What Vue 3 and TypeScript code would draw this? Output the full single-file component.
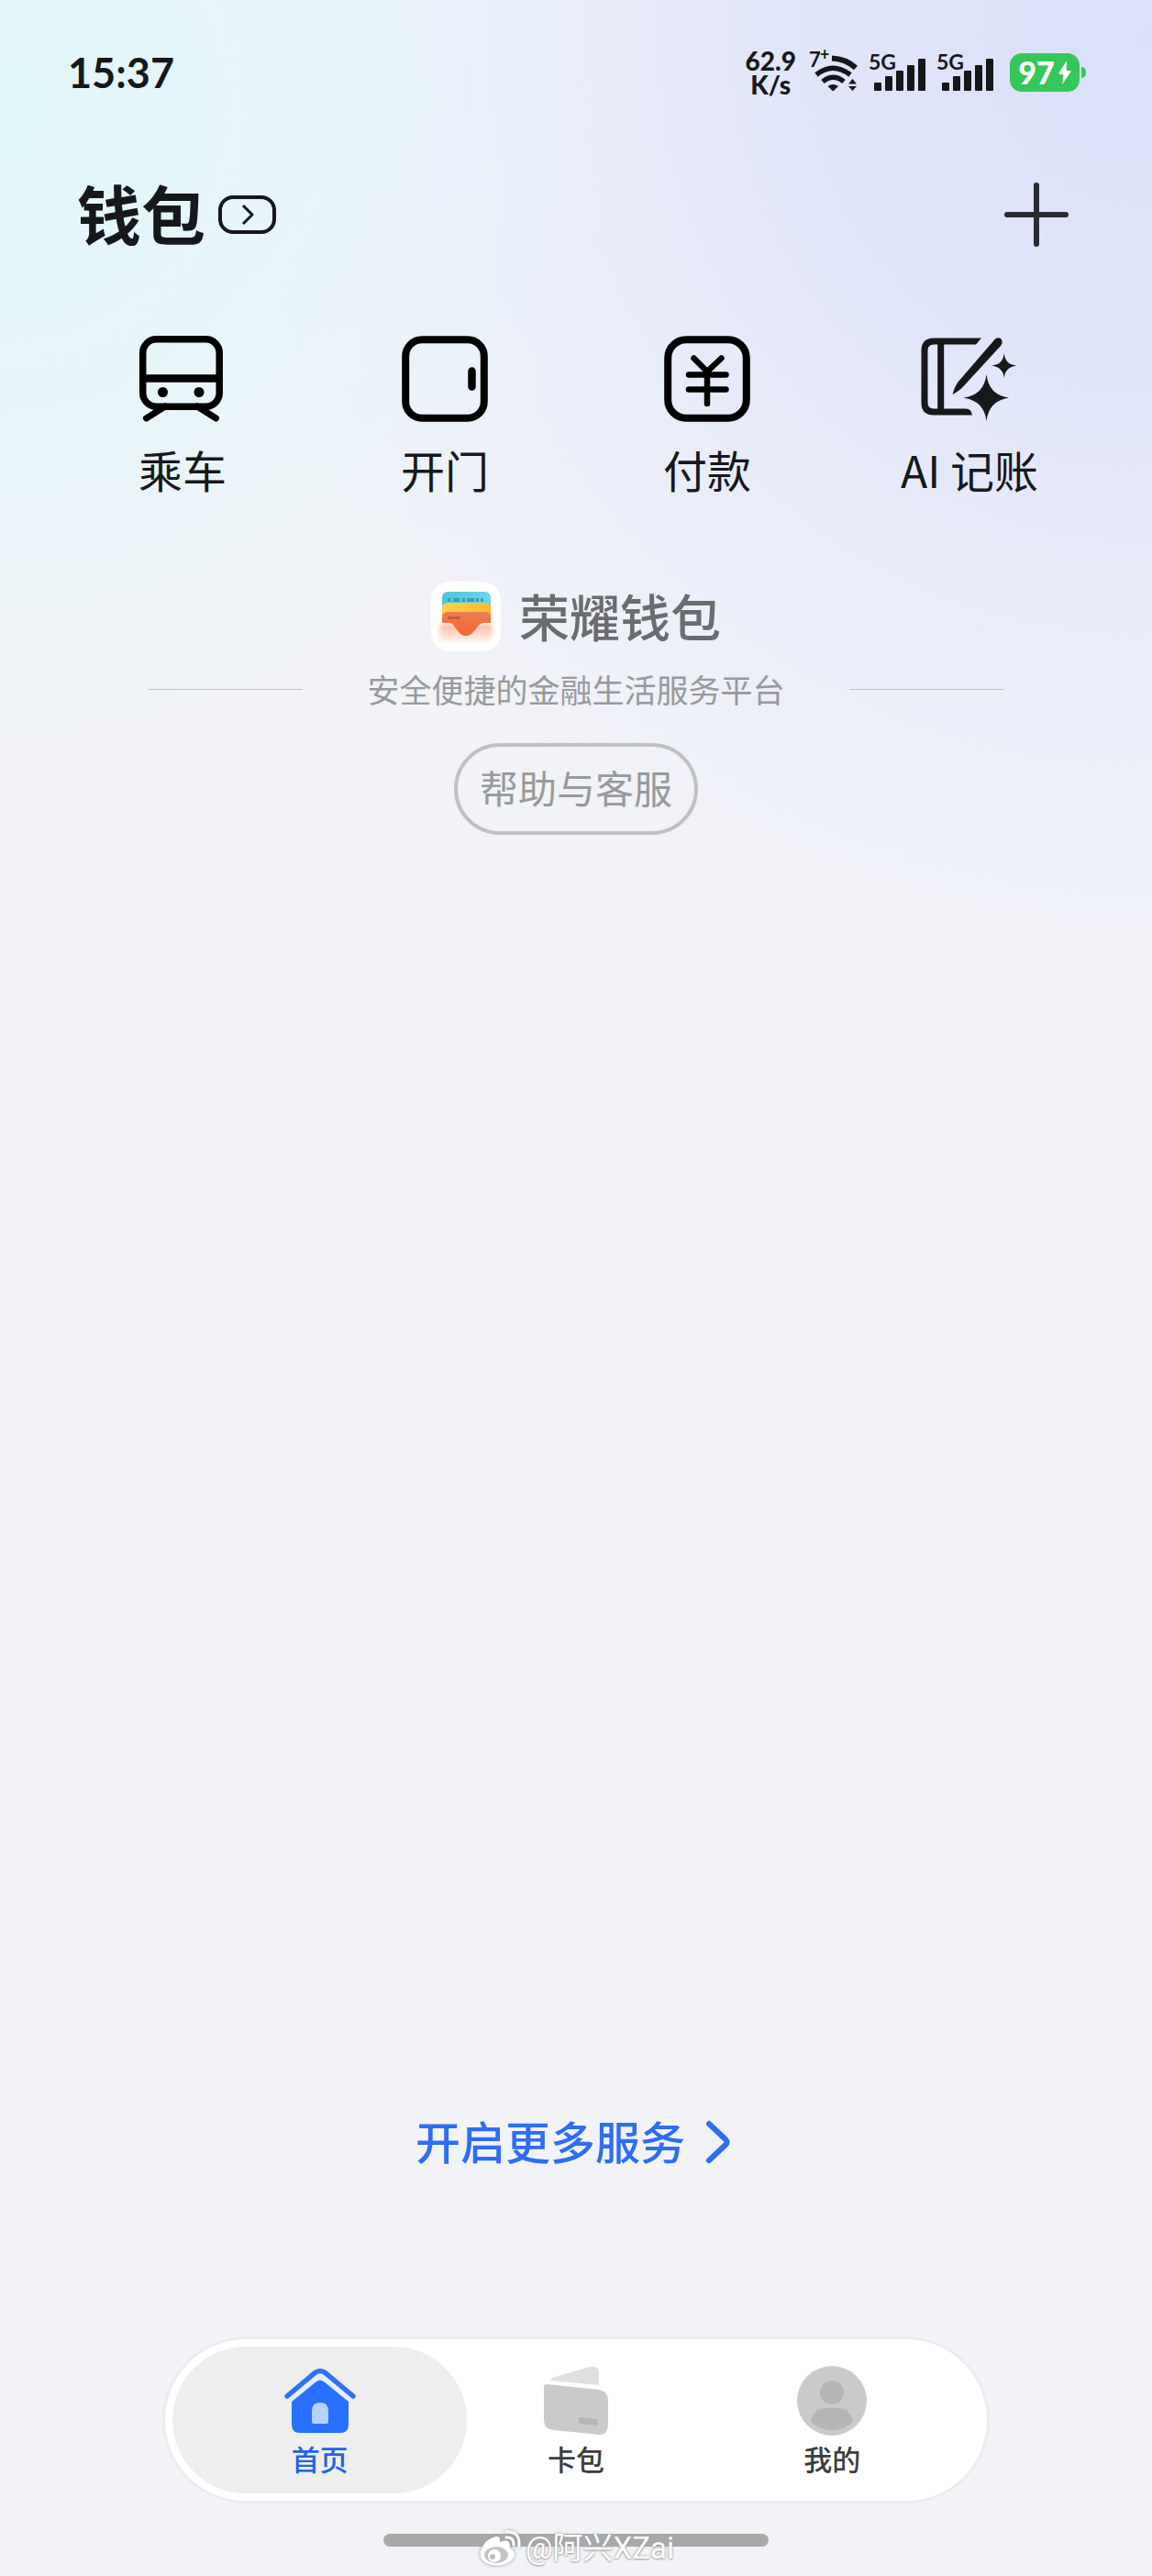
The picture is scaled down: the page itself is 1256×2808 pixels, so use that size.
<script setup lang="ts">
import { ref } from 'vue'

type Tab = 'home' | 'cards' | 'mine'

const tabs: { id: Tab; label: string }[] = [
  { id: 'home', label: '首页' },
  { id: 'cards', label: '卡包' },
  { id: 'mine', label: '我的' },
]
const current = ref<Tab>('home')
const sims = ['sim1', 'sim2']
</script>

<template>
  <div class="page">
    <header class="status">
      <time class="clock">15:37</time>
      <div class="indicators">
        <div class="speed"><span>62.9</span><span>K/s</span></div>
        <div class="wifi">
          <span class="wifi-gen">7<sup>+</sup></span>
          <svg width="54" height="44" viewBox="0 0 54 44" aria-hidden="true">
            <g fill="none" stroke="#15171b" stroke-width="6">
              <path d="M25 6.500Q40 7 51 17" />
              <path d="M8 24.500Q26 10 45 24.500" stroke-width="5.500" />
              <path d="M15 32Q26.500 22.500 38 32" stroke-width="5.500" />
            </g>
            <path d="M20.500 37Q26 33 32 37L26.300 42.500Z" fill="#15171b" />
            <path d="M43 34.500 47.500 29 52 34.500ZM43 37 47.500 42 52 37Z" fill="#15171b" />
          </svg>
        </div>
        <div v-for="sim in sims" :key="sim" class="signal">
          <span class="net">5G</span>
          <svg width="56" height="36" viewBox="0 0 56 36" aria-hidden="true">
            <g fill="#15171b">
              <rect x="0" y="27" width="8" height="9" rx="1" />
              <rect x="12" y="20" width="8" height="16" rx="1" />
              <rect x="24" y="14" width="8" height="22" rx="1" />
              <rect x="36" y="8" width="8" height="28" rx="1" />
              <rect x="48" y="1" width="8" height="35" rx="1" />
            </g>
          </svg>
        </div>
        <div class="battery">
          <div class="battery-body">
            <span>97</span>
            <svg width="14" height="28" viewBox="0 0 14 28" aria-hidden="true">
              <path d="M9 1 0 15.500 5.500 16.500 4 27 14 12.500 8.500 11.500Z" fill="#fff" />
            </svg>
          </div>
          <i class="battery-nub"></i>
        </div>
      </div>
    </header>

    <div class="titlebar">
      <div class="heading">
        <h1>钱包</h1>
        <button class="switcher" type="button" aria-label="切换">
          <svg width="14" height="24" viewBox="0 0 14 24" aria-hidden="true">
            <path d="M2 2 12 12 2 22" fill="none" stroke="#15171b" stroke-width="3" stroke-linejoin="round" />
          </svg>
        </button>
      </div>
      <button class="add" type="button" aria-label="添加">
        <svg width="70" height="70" viewBox="0 0 70 70" aria-hidden="true">
          <path d="M35 3V67M3 35H67" stroke="#2b2c33" stroke-width="6" stroke-linecap="round" />
        </svg>
      </button>
    </div>

    <main>
      <nav class="actions" aria-label="服务">
        <a class="action" href="#ride">
          <svg width="108" height="96" viewBox="0 0 108 96" aria-hidden="true">
            <g fill="none" stroke="#000" stroke-width="7.500">
              <rect x="10.700" y="4.700" width="83.500" height="73.500" rx="15" />
              <path d="M10 47.500H94" stroke-width="8.500" />
              <path d="M35 78 14.500 91M70 78 90.500 91" stroke-width="7" stroke-linecap="round" />
            </g>
            <circle cx="32.500" cy="62.500" r="5.500" /><circle cx="72" cy="62.500" r="5.500" />
          </svg>
          <span>乘车</span>
        </a>
        <a class="action" href="#door">
          <svg width="108" height="96" viewBox="0 0 108 96" aria-hidden="true">
            <rect x="11.200" y="5.200" width="85.600" height="85.600" rx="18" fill="none" stroke="#000" stroke-width="8" />
            <path d="M83.500 39.500V56.500" stroke="#000" stroke-width="8.500" stroke-linecap="round" />
          </svg>
          <span>开门</span>
        </a>
        <a class="action" href="#pay">
          <svg width="108" height="96" viewBox="0 0 108 96" aria-hidden="true">
            <rect x="11.200" y="5.200" width="85.600" height="85.600" rx="20" fill="none" stroke="#000" stroke-width="8" />
            <path d="M39.500 25.500 54 40 69.500 25.500M34 43.500H74.500M34 59.500H74.500M54 40V75" fill="none" stroke="#000" stroke-width="6.500" stroke-linecap="round" stroke-linejoin="round" />
          </svg>
          <span>付款</span>
        </a>
        <a class="action" href="#ledger">
          <svg width="108" height="96" viewBox="0 0 108 96" aria-hidden="true">
            <path d="M67 3.500H16Q1.500 3.500 1.500 17V74Q1.500 87.500 15 87.500H57Q56 80.500 50 80.500H16Q8.500 80.500 8.500 74V17Q8.500 10.500 16 10.500H61Z" fill="#16181b" />
            <path d="M22.700 7V84" stroke="#16181b" stroke-width="7" />
            <path d="M82 4.500Q86 2 88.500 4.500 91 8 88 12L48 55.500Q44 60.500 35.500 65 37 58 41 52Z" fill="#16181b" />
            <path d="M72.500 43Q75 65.500 97 68.500 75 72 72.500 94 70 72 47.500 68.500 70 65.500 72.500 43Z" fill="#16181b" />
            <path d="M91.700 20Q93 32.500 105.500 33.500 93 35 91.700 47 90.500 35 78 33.500 90.500 32.500 91.700 20Z" fill="#16181b" />
          </svg>
          <span>AI 记账</span>
        </a>
      </nav>

      <section class="brand">
        <div class="brand-row">
          <svg class="logo" width="76" height="76" viewBox="0 0 76 76" aria-hidden="true">
            <defs>
              <linearGradient id="sky" x1="0" y1="0" x2="1" y2="0"><stop offset="0" stop-color="#4fc5dc" /><stop offset="1" stop-color="#6ed6e8" /></linearGradient>
              <linearGradient id="sun" x1="0" y1="0" x2="1" y2="0"><stop offset="0" stop-color="#ffd24d" /><stop offset="1" stop-color="#fdba2c" /></linearGradient>
              <linearGradient id="coral" x1="0" y1="0" x2="0" y2="1"><stop offset="0" stop-color="#ef7c50" /><stop offset="1" stop-color="#f2672f" /></linearGradient>
              <linearGradient id="veil" x1="0" y1="0" x2="0" y2="1"><stop offset="0" stop-color="#fbbda2" /><stop offset="1" stop-color="#ffefe7" /></linearGradient>
              <filter id="soft" x="-20%" y="-30%" width="140%" height="160%"><feGaussianBlur stdDeviation="2" /></filter>
            </defs>
            <rect width="76" height="76" rx="20" fill="#fff" />
            <rect x="9" y="46" width="58" height="19" rx="5" fill="url(#veil)" filter="url(#soft)" />
            <path d="M12 40V18Q12 11 19 11H58Q65 11 65 18V40Z" fill="url(#sky)" />
            <path d="M18 18h3v4h-3zM24 18h7v4h-7zM34 18h3v4h-3zM39 18h8v4h-8zM49 18h3v4h-3zM54 18h3v4h-3z" fill="#399fb8" />
            <path d="M12 44V29Q12 23 19 23H58Q65 23 65 29V44Z" fill="url(#sun)" />
            <path d="M12 45V39Q12 33 18 33H59Q65 33 65 39V45H57C50 45 48 59 38 59S27 45 20 45Z" fill="url(#coral)" />
            <rect x="18" y="38" width="14" height="3" rx="1" fill="#ca5b37" />
          </svg>
          <h2>荣耀钱包</h2>
        </div>
        <p class="slogan"><span>安全便捷的金融生活服务平台</span></p>
        <button class="help" type="button">帮助与客服</button>
      </section>
    </main>

    <a class="more" href="#more">
      <span>开启更多服务</span>
      <svg width="34" height="48" viewBox="0 0 34 48" aria-hidden="true">
        <path d="M4 4 22 21Q25 24 22 27L4 44" fill="none" stroke="#2f6df2" stroke-width="6" stroke-linecap="round" />
      </svg>
    </a>

    <nav class="tabs" aria-label="主导航">
      <button
        v-for="tab in tabs"
        :key="tab.id"
        type="button"
        class="tab"
        :class="{ active: current === tab.id }"
        @click="current = tab.id"
      >
        <svg v-if="tab.id === 'home'" width="80" height="80" viewBox="0 0 80 80" aria-hidden="true">
          <path d="M8 35 36 10Q40 7 44 10L72 35V42L44 18Q40 15 36 18L8 42Z" fill="#e6eefd" />
          <path d="M4 33 34.500 7.500Q40 3.500 45.500 7.500L76 33" fill="none" stroke="#2f70f5" stroke-width="5.500" stroke-linecap="round" />
          <path d="M9 39 36 17Q40 14 44 17L71 39V64Q71 73 62 73H18Q9 73 9 64Z" fill="#2870ff" />
          <path d="M31 61V49Q31 40 40 40T49 49V61Q49 63 47 63H33Q31 63 31 61Z" fill="#b9d1ff" />
        </svg>
        <svg v-else-if="tab.id === 'cards'" width="80" height="80" viewBox="0 0 80 80" aria-hidden="true">
          <path d="M14 13 55 1Q65-1 65 8V21L14 16Q11 15 14 13Z" fill="#dedede" />
          <path d="M8 20 66 26Q75 28 75 38V65Q74 75 66 75L16 70Q5 69 5 59V23Q5 20 8 20Z" fill="#cacaca" />
          <path d="M45 56 62 58Q64 58 64 60V65L45 63Q43 63 43 61V58Q43 56 45 56Z" fill="#b5b5b5" />
        </svg>
        <svg v-else width="80" height="80" viewBox="0 0 80 80" aria-hidden="true">
          <circle cx="40" cy="38" r="38" fill="#cacaca" />
          <circle cx="40" cy="29" r="13" fill="#b5b5b5" />
          <path d="M17 61Q20 46 34 46H46Q60 46 63 61 53 70 40 70T17 61Z" fill="#b5b5b5" />
        </svg>
        <span>{{ tab.label }}</span>
      </button>
    </nav>

    <footer class="gesture">
      <div class="gesture-bar"></div>
      <div class="watermark">
        <svg width="46" height="42" viewBox="0 0 46 42" aria-hidden="true">
          <path d="M19 8Q25 7 24 14 34 10 35 17 34 20 37 22 44 29 34 36 24 42 12 38 1 34 3 24 7 11 19 8Z" fill="#fff" />
          <ellipse cx="20" cy="28" rx="13" ry="9" fill="#c4c5c7" />
          <circle cx="18" cy="29" r="7" fill="#fff" />
          <circle cx="16" cy="30" r="3" fill="#bcbdbf" />
          <path d="M31 9Q39 8 39 17M31 3Q46 2 45 18" fill="none" stroke="#fff" stroke-width="3" stroke-linecap="round" />
        </svg>
        <span>@阿兴XZai</span>
      </div>
    </footer>
  </div>
</template>

<style>
body {
  margin: 0;
}
</style>

<style scoped>
.page {
  min-height: 100vh;
  display: flex;
  flex-direction: column;
  box-sizing: border-box;
  color: #16181b;
  font-family: "Noto Sans CJK SC", "Noto Sans", sans-serif;
  background:
    radial-gradient(ellipse 680px 700px at 0 120px, #e1f7fa 0, #e2f6facc 35%, #e8f5f800 100%),
    radial-gradient(ellipse 1040px 1060px at 100% 40px, #dadffb 0, #dee3fad8 38%, #e6ebfa90 70%, #f1f3f700 100%),
    #f1f3f7;
}
button {
  margin: 0;
  padding: 0;
  border: 0;
  background: none;
  color: inherit;
  font-family: inherit;
  cursor: pointer;
}
a {
  color: inherit;
  text-decoration: none;
}
svg {
  display: block;
  overflow: visible;
}
h1,
h2,
p {
  margin: 0;
}

.status {
  height: 158px;
  padding: 0 72px 0 74px;
  display: flex;
  align-items: center;
  justify-content: space-between;
  font-family: Lato, sans-serif;
  font-weight: 700;
}
.clock {
  font-size: 45px;
  line-height: 56px;
}
.indicators {
  display: flex;
  align-items: center;
}
.speed {
  display: flex;
  flex-direction: column;
  align-items: center;
  margin-right: 14px;
  font-size: 28px;
  line-height: 26px;
  font-weight: 900;
}
.wifi {
  position: relative;
  margin-right: 17px;
}
.wifi-gen {
  position: absolute;
  left: 0;
  top: -4px;
  font-size: 22px;
  line-height: 24px;
}
.wifi-gen sup {
  position: absolute;
  left: 12px;
  top: -4px;
  font-size: 18px;
  line-height: 20px;
}
.signal {
  position: relative;
  margin-right: 18px;
  padding-top: 4px;
}
.net {
  position: absolute;
  left: -6px;
  top: -4px;
  font-size: 23px;
  line-height: 24px;
}
.battery {
  display: flex;
  align-items: center;
  gap: 2px;
}
.battery-body {
  width: 76px;
  height: 42px;
  display: flex;
  align-items: center;
  justify-content: center;
  gap: 4px;
  border-radius: 13px;
  background: #35c759;
  color: #fff;
  font-size: 34px;
  line-height: 42px;
  font-weight: 900;
}
.battery-nub {
  width: 5px;
  height: 12px;
  border-radius: 0 6px 6px 0;
  background: #35c759;
}

.titlebar {
  height: 152px;
  padding: 0 91px 0 84px;
  display: flex;
  align-items: center;
  justify-content: space-between;
}
.heading {
  display: flex;
  align-items: center;
  gap: 14px;
}
h1 {
  padding-bottom: 4px;
  font-size: 70px;
  line-height: 84px;
  font-weight: 700;
}
.switcher {
  width: 63px;
  height: 42px;
  display: flex;
  align-items: center;
  justify-content: center;
  border: 4px solid #15171b;
  border-radius: 16px;
}

.actions {
  padding: 55px 56px 0;
  display: grid;
  grid-template-columns: repeat(4, 1fr);
}
.action {
  display: flex;
  flex-direction: column;
  align-items: center;
  gap: 22px;
  font-size: 48px;
  line-height: 56px;
}

.brand {
  margin-top: 95px;
  display: flex;
  flex-direction: column;
  align-items: center;
}
.brand-row {
  display: flex;
  align-items: flex-start;
  gap: 20px;
  color: #6b6c6f;
}
h2 {
  font-size: 55px;
  line-height: 72px;
  font-weight: 500;
}
.slogan {
  width: 932px;
  max-width: 100%;
  margin-top: 20px;
  display: flex;
  align-items: center;
  justify-content: space-between;
  font-size: 35px;
  line-height: 42px;
  color: #98999c;
}
.slogan::before,
.slogan::after {
  content: "";
  width: 168px;
  height: 1px;
  background: #c0c1c7;
}
.help {
  margin-top: 38px;
  height: 100px;
  padding: 0 24px 4px;
  border: 4px solid #bfc0c4;
  border-radius: 50px;
  font-size: 42px;
  line-height: 56px;
  color: #98999c;
}

.more {
  margin-top: auto;
  align-self: center;
  display: flex;
  align-items: center;
  gap: 22px;
  font-size: 49px;
  line-height: 56px;
  font-weight: 500;
  color: #2f6df2;
}
.more span {
  padding-bottom: 4px;
}

.tabs {
  box-sizing: border-box;
  width: 902px;
  max-width: 100%;
  margin: 182px auto 0;
  padding: 8px;
  display: flex;
  border: 3px solid #ebebf0;
  border-radius: 91px;
  background: #fff;
}
.tab {
  flex: 238 1 0;
  height: 160px;
  padding-top: 3px;
  display: flex;
  flex-direction: column;
  align-items: center;
  justify-content: center;
  gap: 1px;
  border-radius: 80px;
  font-size: 31px;
  line-height: 40px;
  font-weight: 500;
  color: #3c3d3f;
}
.tab:first-child,
.tab:last-child {
  flex-grow: 322;
}
.tab.active {
  background: #eee;
  color: #1f63e6;
}

.gesture {
  position: relative;
  margin-top: 33px;
  padding-bottom: 32px;
}
.gesture-bar {
  width: 420px;
  height: 14px;
  margin: 0 auto;
  border-radius: 7px;
  background: #a8aaaa;
}
.watermark {
  position: absolute;
  left: 0;
  right: 0;
  top: -6px;
  display: flex;
  align-items: center;
  justify-content: center;
  gap: 6px;
  color: #fff;
  font-family: Roboto, "Noto Sans CJK SC", sans-serif;
  font-size: 33px;
  line-height: 44px;
  text-shadow: 0 0 3px #999, 0 1px 2px #aaa;
}
.watermark svg {
  filter: drop-shadow(0 0 2px #999);
}
</style>
